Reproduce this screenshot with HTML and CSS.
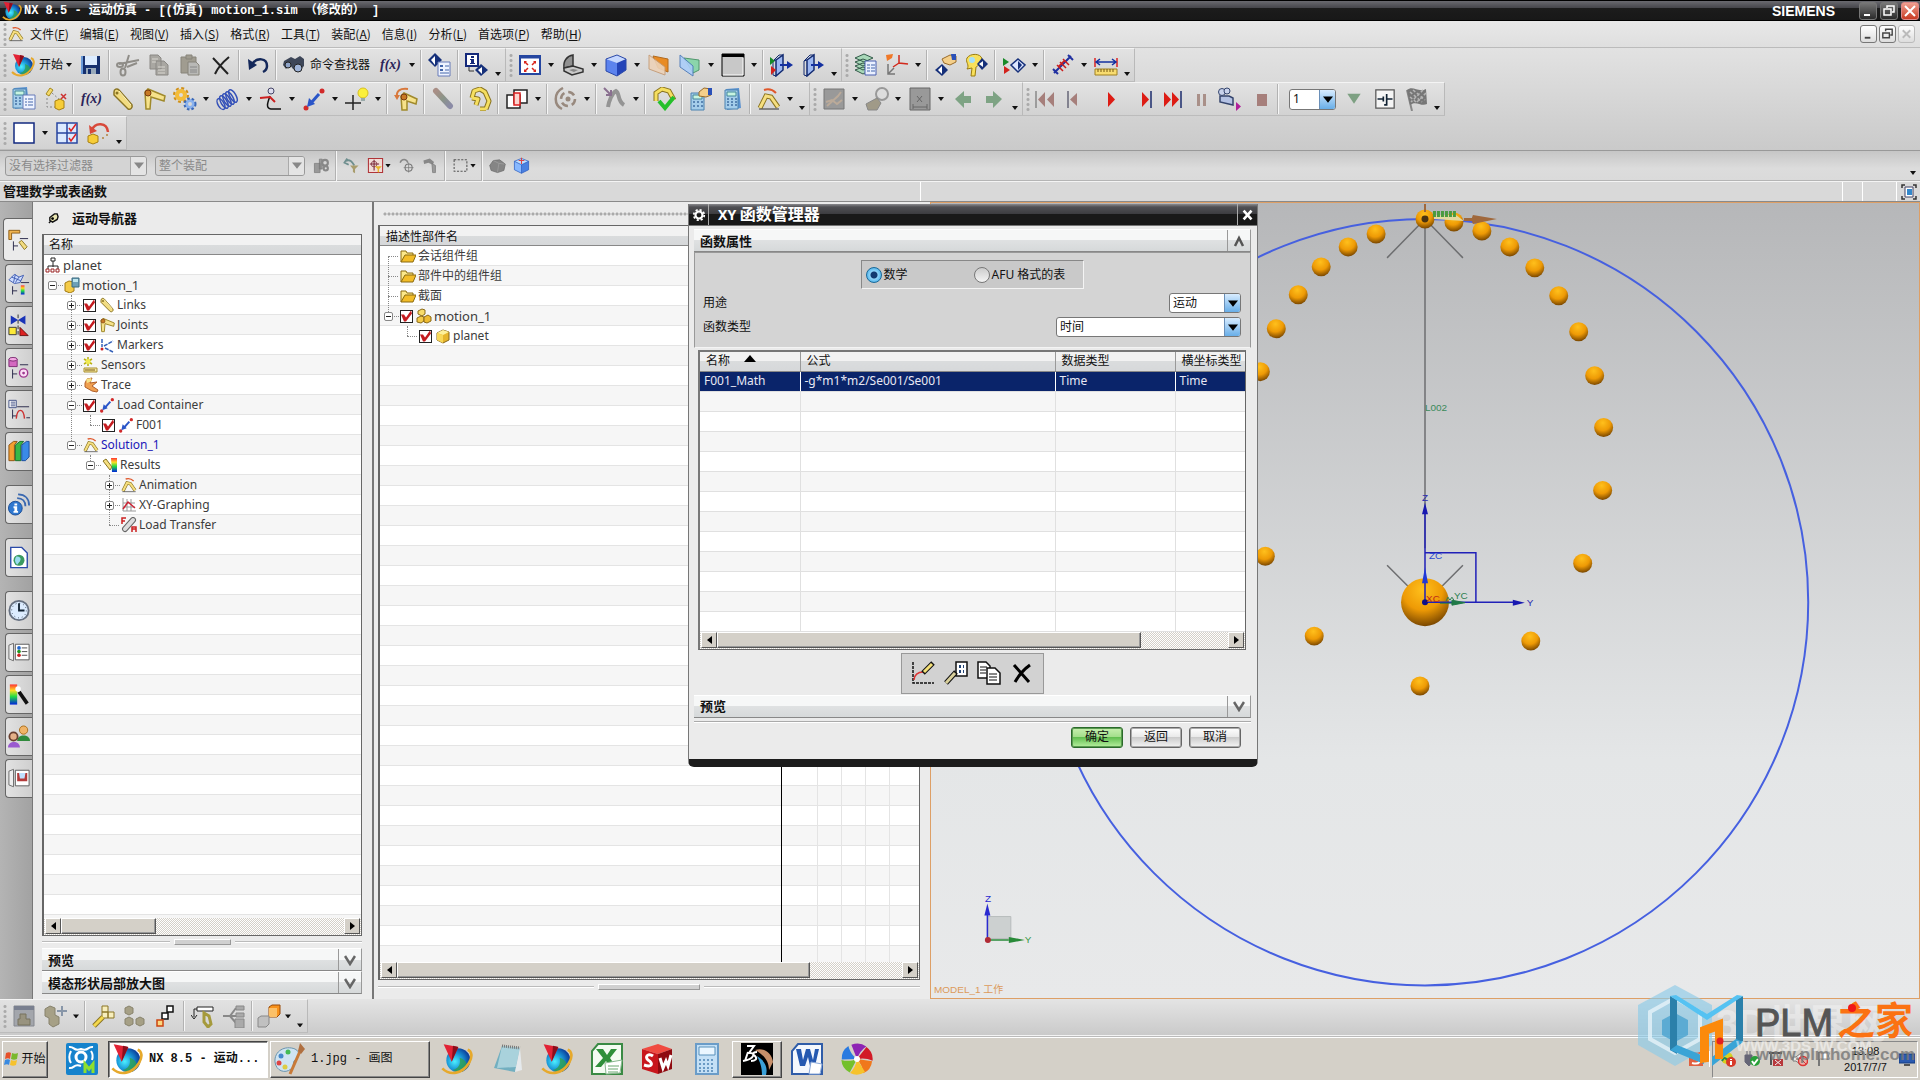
FILE: index.html
```html
<!DOCTYPE html>
<html lang="zh-CN">
<head>
<meta charset="utf-8">
<title>NX 8.5 - 运动仿真</title>
<link rel="stylesheet" href="styles.css">
</head>
<body>
<svg class="sprite" aria-hidden="true">
<defs>
<radialGradient id="gGlobe" cx=".35" cy=".55" r=".65"><stop offset="0" stop-color="#4df0ff"/><stop offset=".5" stop-color="#1a98d8"/><stop offset="1" stop-color="#0a3a98"/></radialGradient>
<radialGradient id="gBall" cx=".45" cy=".25" r=".75"><stop offset="0" stop-color="#ffc01c"/><stop offset=".55" stop-color="#ee9a05"/><stop offset="1" stop-color="#7a4700"/></radialGradient>
<linearGradient id="gRain" x2="0" y2="1"><stop offset="0" stop-color="#f33"/><stop offset=".3" stop-color="#fd2"/><stop offset=".6" stop-color="#2d4"/><stop offset="1" stop-color="#02d"/></linearGradient>
<linearGradient id="gSteel" x2="1" y2="1"><stop offset="0" stop-color="#a98f86"/><stop offset=".5" stop-color="#8a9488"/><stop offset="1" stop-color="#8b8ba6"/></linearGradient>
</defs>
<symbol id="nx" viewBox="0 0 24 24"><circle cx="13" cy="13" r="9" fill="url(#gGlobe)"/><path d="M9 20c4-1 6-4 5-9 3 1 6 3 5 7-2 4-6 5-10 2z" fill="#2fa050" opacity=".8"/><path d="M1 19c6 6 15 4 20-4 3-5 2-9-1-10" fill="none" stroke="#e6a92c" stroke-width="2"/><path d="M2 1l11 2-5 11z" fill="#e22235"/><path d="M9 2l4 1-5 11z" fill="#8c0d1c"/></symbol>
<symbol id="save" viewBox="0 0 24 24"><path d="M3 3h18v18H3z" fill="#16306e"/><path d="M6 3h12v9H6z" fill="#dcecff"/><path d="M7 15h10v6H7z" fill="#9ab"/><path d="M9 16h3v5H9z" fill="#16306e"/><path d="M3 3v18" stroke="#6a9ad8" stroke-width="2"/></symbol>
<symbol id="cut" viewBox="0 0 24 24"><g fill="none" stroke="#8f8d88" stroke-width="2"><path d="M13 2l-4 13M3 11l20-4M21 10L11 14"/><ellipse cx="7" cy="19" rx="2.500" ry="3.500"/><ellipse cx="4" cy="12" rx="3" ry="2"/></g></symbol>
<symbol id="copy" viewBox="0 0 24 24"><g fill="#a9a7a2" stroke="#8a8884"><path d="M3 2h8l3 3v11H3zM9 8h8l4 4v10H9z"/><path d="M5 6h6M5 9h4M11 14h7M11 17h7M11 20h7" stroke="#d8d6d0"/></g></symbol>
<symbol id="paste" viewBox="0 0 24 24"><g fill="#a09c90" stroke="#87847a"><path d="M3 4h15v16H3z"/><path d="M8 2h6v4H8z"/><path d="M10 9h8l3 3v10H10z" fill="#b9b9b6"/><path d="M12 14h7M12 17h7M12 19h7" stroke="#888"/></g></symbol>
<symbol id="del" viewBox="0 0 24 24"><path d="M4 5l15 16M20 4C14 9 9 14 6 21" fill="none" stroke="#222" stroke-width="2"/></symbol>
<symbol id="undo" viewBox="0 0 24 24"><path d="M6 11C11 4 21 5 21 13c0 3-2 5-4 6" fill="none" stroke="#14285a" stroke-width="2.500"/><path d="M2 6l1 11 8-5z" fill="#14285a"/></symbol>
<symbol id="binoc" viewBox="0 0 24 24"><path d="M2 8l7-4 4 2 5-3 4 3v7l-6 6-5-3-3-4-4 4-3-4z" fill="#3d4658"/><circle cx="6" cy="12" r="3" fill="#8fa4c8" stroke="#222"/><circle cx="16" cy="15" r="4" fill="#9fb4d8" stroke="#222"/></symbol>
<symbol id="inf1" viewBox="0 0 24 24"><path d="M7 0l7 7-7 7-7-7z" fill="#16307a"/><path d="M7 3v9L3 7z" fill="#fff"/><path d="M10 9h12v14H10z" fill="#eef3ff" stroke="#667ab8"/><path d="M12 12h3v2h-3zM12 16h3v2h-3z" fill="#46a"/><path d="M17 13h4M17 17h4M12 20h9" stroke="#46a"/></symbol>
<symbol id="inf2" viewBox="0 0 24 24"><path d="M1 1h12v12H1z" fill="#fff" stroke="#14287a" stroke-width="2"/><path d="M6 3h3v2H6zM5 6h4v4h1v1H5v-1h1V7H5z" fill="#14287a"/><path d="M16 11l7 6-7 6-6-6z" fill="#16307a"/><path d="M17 14v7l-4-4z" fill="#fff"/><path d="M4 14v4h5" stroke="#333" fill="none"/></symbol>
<symbol id="fit" viewBox="0 0 24 24"><path d="M2 3h20v18H2z" fill="#fff" stroke="#2546a0" stroke-width="2"/><path d="M2 4h20" stroke="#2546a0" stroke-width="3"/><path d="M7 9l3 3M17 9l-3 3M7 18l3-3M17 18l-3-3" stroke="#d9261c" stroke-width="1.500"/><path d="M6 8h3l-3 3zM18 8h-3l3 3zM6 19h3l-3-3zM18 19h-3l3-3z" fill="#d9261c"/></symbol>
<symbol id="lap" viewBox="0 0 24 24"><path d="M3 15C2 8 6 3 12 2v11z" fill="#909090" stroke="#333" stroke-width="1.500"/><path d="M3 15l9-2 10 3v3l-11 3-8-4z" fill="#c9c9c9" stroke="#333" stroke-width="1.500"/><path d="M8 17l4-1 5 1-4 2z" fill="#888"/></symbol>
<symbol id="cube" viewBox="0 0 24 24"><path d="M2 6l11-4 9 4-9 4z" fill="#c6d8ff"/><path d="M2 6l11 4v13L2 18z" fill="#5c83ee"/><path d="M22 6l-9 4v13l9-6z" fill="#2444b8"/><path d="M2 6l11-4 9 4v11l-9 6-11-5z" fill="none" stroke="#2a48a8"/></symbol>
<symbol id="clipo" viewBox="0 0 24 24"><path d="M6 3l15 3v13l-10-4z" fill="#e88b24" stroke="#b06a20"/><path d="M2 2l16 12v8L2 16z" fill="#ecd2b8" stroke="#c49a74" opacity=".9"/></symbol>
<symbol id="clipb" viewBox="0 0 24 24"><path d="M6 5l15 2v10l-6 3z" fill="#8bd5ab" stroke="#50966c"/><path d="M2 2l13 11v10L2 14z" fill="#abcdf8" stroke="#4a78b8" opacity=".9"/></symbol>
<symbol id="win" viewBox="0 0 24 24"><path d="M1 1h22v22H1z" fill="#c8c8c8" stroke="#000"/><path d="M1 1h22v3H1z"/><path d="M2 22h20V5" stroke="#fff" fill="none"/></symbol>
<symbol id="exit" viewBox="0 0 24 24"><path d="M6 7l7-5v15l-7 6z" fill="#9db8f2" stroke="#122a70" stroke-width="1.500"/><path d="M6 7l-3 1v14l3 1M13 2H9L3 8" fill="none" stroke="#122a70"/><path d="M10 12h9" stroke="#1430a0" stroke-width="2" fill="none"/><path d="M17 8l6 4-6 4z" fill="#1430a0"/></symbol>
<symbol id="exit1" viewBox="0 0 24 24"><use href="#exit"/><path d="M0 4l5 4-5 4z" fill="#188a28"/><path d="M1 13l5 4-5 5z" fill="#d2221c"/></symbol>
<symbol id="layers" viewBox="0 0 24 24"><g fill="#a8d8b8" stroke="#335a4a"><path d="M1 17l8-3 8 3-8 4zM1 13l8-3 8 3-8 4zM1 9l8-3 8 3-8 4zM1 5l9-4 9 4-9 4z"/></g><path d="M11 8h11v14H11z" fill="#eaf0ff" stroke="#4a60b0"/><path d="M13 12h3M13 15h3M13 18h3M17 12h4M17 15h4M17 18h4" stroke="#46a"/></symbol>
<symbol id="wcs" viewBox="0 0 24 24"><path d="M14 2v8l9 1M14 10l-6 4" stroke="#d22a1c" stroke-width="1.500" fill="none"/><path d="M1 2l7-1-1 4-5 3z" fill="#f07828"/><path d="M3 11v10h7M3 21l6-6" stroke="#777" stroke-width="1.500" fill="none"/></symbol>
<symbol id="dhand" viewBox="0 0 24 24"><path d="M8 11l6 6-6 6-7-6z" fill="#16307a"/><path d="M8 13v8l-4-4z" fill="#fff"/><path d="M8 6l8-4 6 1v6l-6 3-6-2z" fill="#f4cf8a" stroke="#9a6b2a"/><path d="M17 1h5v6h-4z" fill="#2a50b8"/></symbol>
<symbol id="dkey" viewBox="0 0 24 24"><path d="M2 5c3-5 14-5 15 1 0 5-5 7-6 8l-1 9H6l1-8-5 1c3-4-2-7 0-11z" fill="#f8e05a" stroke="#9a7c10"/><circle cx="7" cy="7" r="3" fill="#a5e0f8"/><path d="M17 5l6 6-6 6-5-6z" fill="#16307a"/><path d="M18 8v6l-4-3z" fill="#fff"/></symbol>
<symbol id="dplay" viewBox="0 0 24 24"><path d="M1 5l6 4-6 4z" fill="#188a28"/><path d="M2 13l6 4-6 4z" fill="#d2221c"/><path d="M16 6l7 6-7 7-7-7z" fill="#dde6ff" stroke="#16307a" stroke-width="1.500"/><path d="M16 8l4 4-4 5z" fill="#16307a"/></symbol>
<symbol id="meas" viewBox="0 0 24 24"><path d="M3 20L20 3M2 16l5 5M17 2l5 5" stroke="#2030a0" stroke-width="2"/><path d="M6 12l6 6M9 9l6 6M12 6l6 6M8 13l5-5" stroke="#cc1a1a" stroke-width="1.500"/></symbol>
<symbol id="ruler" viewBox="0 0 24 24"><path d="M1 5v9M23 5v9" stroke="#d22" stroke-width="1.500"/><path d="M2 9h20M6 6L2 9l4 3M18 6l4 3-4 3" stroke="#1430a0" stroke-width="1.500" fill="none"/><path d="M1 16h22v6H1z" fill="#f8dc70" stroke="#a08020"/><path d="M4 16v3M7 16v3M10 16v3M13 16v3M16 16v3M19 16v3" stroke="#765810"/></symbol>
<symbol id="calc" viewBox="0 0 24 24"><path d="M6 2l13-1 2 20-14 2z" fill="#5b92d0"/><path d="M5 3h13v19H5z" fill="#a5cdea" stroke="#4b82b0"/><path d="M7 5h9v4H7z" fill="#c8f4e0" stroke="#489"/><path d="M7 12h2M11 12h2M15 12h2M7 15h2M11 15h2M15 15h2M7 18h2M11 18h2M15 18h2" stroke="#5a86b4" stroke-width="2"/></symbol>
<symbol id="calcl" viewBox="0 0 24 24"><g transform="translate(-4 -1)"><use href="#calc" width="24" height="24"/></g><path d="M11 8h12v14H11z" fill="#eef3ff" stroke="#667ab8"/><path d="M13 12h2M13 15h2M13 18h2M16 12h5M16 15h5M16 18h5" stroke="#46a"/></symbol>
<symbol id="lcube" viewBox="0 0 24 24"><path d="M3 7l4-6 3 2-4 6z" fill="#f4da6a" stroke="#a58a20"/><path d="M4 11v9h8M9 6l8 7" stroke="#888" stroke-dasharray="2 2" fill="none"/><path d="M12 14l5-2 4 2v7l-5 2-4-2z" fill="#f6cd38" stroke="#a88010"/><path d="M18 7l5 5M23 7l-5 5" stroke="#c33" stroke-width="1.500"/></symbol>
<symbol id="link" viewBox="0 0 24 24"><path d="M3 5c0-3 3-4 5-2l13 15c1 3-2 5-4 4L3 8z" fill="#f2dc80" stroke="#8a7424" stroke-width="1.500"/><circle cx="6" cy="6" r="1.500" fill="#8a7424"/><path d="M8 4l12 14" stroke="#fff6c0"/></symbol>
<symbol id="joint" viewBox="0 0 24 24"><path d="M3 5l3-3 17 7-1 5-13-4-1 12H4z" fill="#f6e28a" stroke="#a08a2c" stroke-width="1.500"/><circle cx="6" cy="6" r="3" fill="#c87a24" stroke="#7a3a10"/></symbol>
<symbol id="gears" viewBox="0 0 24 24"><circle cx="8" cy="8" r="4" fill="none" stroke="#f4bc38" stroke-width="4"/><circle cx="8" cy="8" r="7" fill="none" stroke="#d09018" stroke-width="2" stroke-dasharray="3 2.500"/><circle cx="17" cy="17" r="3.500" fill="none" stroke="#8ab2ee" stroke-width="3"/><circle cx="17" cy="17" r="5.500" fill="none" stroke="#3a68b8" stroke-width="2" stroke-dasharray="2.500 2"/></symbol>
<symbol id="spring" viewBox="0 0 24 24"><g fill="none" stroke="#3350b8" stroke-width="1.500"><ellipse cx="5" cy="17" rx="3" ry="6" transform="rotate(-30 5 17)"/><ellipse cx="8" cy="15" rx="3" ry="7" transform="rotate(-30 8 15)"/><ellipse cx="11" cy="13" rx="3" ry="7" transform="rotate(-30 11 13)"/><ellipse cx="14" cy="11" rx="3" ry="7" transform="rotate(-30 14 11)"/><ellipse cx="17" cy="9" rx="3" ry="7" transform="rotate(-30 17 9)"/></g></symbol>
<symbol id="curve" viewBox="0 0 24 24"><path d="M11 9c-3 8-4 12 1 13h10" fill="none" stroke="#111" stroke-width="1.500"/><circle cx="12" cy="4" r="3" fill="#dde" stroke="#446"/><path d="M1 11l10-1 5 5" stroke="#cc2020" stroke-width="2" fill="none"/></symbol>
<symbol id="force" viewBox="0 0 24 24"><circle cx="20" cy="4" r="2.500" fill="#d22a2a"/><circle cx="4" cy="21" r="2.500" fill="#d22a2a"/><path d="M17 7l-8 9" stroke="#2a55c8" stroke-width="3"/><path d="M5 20l2-9 6 6z" fill="#2a55c8"/></symbol>
<symbol id="bulb" viewBox="0 0 24 24"><path d="M8 8v15M0 16h16" stroke="#222" stroke-width="1.500"/><circle cx="18" cy="6" r="5" fill="#fbf03c" stroke="#d8c020"/><path d="M16 11h4v3h-4z" fill="#9aa"/></symbol>
<symbol id="rjoint" viewBox="0 0 24 24"><path d="M7 9l3-3 13 6-1 5-9-3v9H8z" fill="#f6e28a" stroke="#a08a2c" stroke-width="1.500"/><circle cx="10" cy="10" r="3" fill="#c87a24" stroke="#7a3a10"/><path d="M3 10C2 4 6 1 14 2" fill="none" stroke="#d8783c" stroke-width="2"/><path d="M0 8h6l-3 5z" fill="#d8783c"/></symbol>
<symbol id="pill" viewBox="0 0 24 24"><path d="M5 4l14 15" stroke="url(#gSteel)" stroke-width="6" stroke-linecap="round"/></symbol>
<symbol id="arm" viewBox="0 0 24 24"><path d="M4 11L6 4l6-2 5 3 4 9-3 8M4 11l6 1-2 6M18 22h-6" fill="none" stroke="#8a7420" stroke-width="5" stroke-linejoin="round"/><path d="M4 11L6 4l6-2 5 3 4 9-3 8M4 11l6 1-2 6M18 22h-6" fill="none" stroke="#f6df60" stroke-width="3" stroke-linejoin="round"/></symbol>
<symbol id="over" viewBox="0 0 24 24"><path d="M9 3h13v13H9zM2 8h13v13H2z" fill="#fff" stroke="#222" stroke-width="1.500"/><path d="M9 6h6v12H9z" fill="#fbd6d0" stroke="#d22" stroke-width="1.500"/></symbol>
<symbol id="orbit" viewBox="0 0 24 24"><g fill="none" stroke="#98897e" stroke-width="2.500"><path d="M9 1C-1 6 0 18 8 22"/><circle cx="14" cy="12" r="7" stroke-dasharray="7 4"/></g><circle cx="14" cy="12" r="2.500" fill="#98897e"/></symbol>
<symbol id="gcurve" viewBox="0 0 24 24"><path d="M5 20C6 14 9 6 13 4c4 2 1 10 8 14" fill="none" stroke="#949494" stroke-width="4"/><path d="M1 1l7 7M8 3v5H3" stroke="#8a7090" stroke-width="2" fill="none"/></symbol>
<symbol id="armok" viewBox="0 0 24 24"><path d="M4 14V6l6-4 7 2 5 9" fill="none" stroke="#8a7420" stroke-width="5"/><path d="M4 14V6l6-4 7 2 5 9" fill="none" stroke="#f6df60" stroke-width="3"/><path d="M7 14l6 7 9-11" fill="none" stroke="#25c02c" stroke-width="4"/></symbol>
<symbol id="calch" viewBox="0 0 24 24"><path d="M2 6h13v17H2z" fill="#a5cdea" stroke="#4b82b0"/><path d="M4 8h9v4H4z" fill="#c8f4e0" stroke="#489"/><path d="M4 15h2M8 15h2M12 15h2M4 19h2M8 19h2M12 19h2" stroke="#5a86b4" stroke-width="2"/><path d="M10 5l5-4 7 1v6l-5 2-7-1z" fill="#f4cf8a" stroke="#9a6b2a"/><path d="M19 1h4v7h-4z" fill="#2a50b8"/></symbol>
<symbol id="solve" viewBox="0 0 24 24"><path d="M3 21L9 9l5 1 7 10" fill="none" stroke="#8a7420" stroke-width="5"/><path d="M3 21L9 9l5 1 7 10" fill="none" stroke="#f6df80" stroke-width="3"/><path d="M7 3c6-2 9 0 12 3" fill="none" stroke="#e0582c" stroke-width="2"/><path d="M2 22h20" stroke="#333"/></symbol>
<symbol id="gwr" viewBox="0 0 24 24"><path d="M2 2h20v20H2z" fill="#999" stroke="#777"/><path d="M5 19L16 9l3-4M4 15l6-2 5 4 5-4" stroke="#ba9" stroke-width="2" fill="none"/></symbol>
<symbol id="gmag" viewBox="0 0 24 24"><circle cx="17" cy="7" r="6" fill="#ddd" stroke="#999" stroke-width="2"/><path d="M1 17l11-6 4 5-4 7H3z" fill="#a09a88" stroke="#888"/></symbol>
<symbol id="gx" viewBox="0 0 24 24"><path d="M2 1h20v22H2z" fill="#999" stroke="#666"/><path d="M9 9l5 6M14 9l-5 6M5 20h14M5 17v5M19 17v5" stroke="#666"/></symbol>
<symbol id="al" viewBox="0 0 24 24"><path d="M4 12l9-8v5h7v7h-7v5z" fill="#7ea384"/></symbol>
<symbol id="ar" viewBox="0 0 24 24"><path d="M20 12l-9-8v5H4v7h7v5z" fill="#7ea384"/></symbol>
<symbol id="rew" viewBox="0 0 24 24"><path d="M12 5v15l-7-7.500zM21 5v15l-7-7.500z" fill="#a67f7b"/><path d="M3 4v17" stroke="#888" stroke-width="1.500"/></symbol>
<symbol id="back" viewBox="0 0 24 24"><path d="M17 6v13l-7-6.500z" fill="#a67f7b"/><path d="M8 4v17" stroke="#667" stroke-width="1.500"/></symbol>
<symbol id="play" viewBox="0 0 24 24"><path d="M9 5l7 7.500L9 20z" fill="#dd1c14"/></symbol>
<symbol id="step" viewBox="0 0 24 24"><path d="M8 5l7 7.500L8 20z" fill="#dd1c14"/><path d="M17 4v17" stroke="#1b2b6b" stroke-width="1.500"/></symbol>
<symbol id="ff" viewBox="0 0 24 24"><path d="M3 5l7 7.500L3 20zM11 5l7 7.500-7 7.500z" fill="#dd1c14"/><path d="M20 4v17" stroke="#1b2b6b" stroke-width="1.500"/></symbol>
<symbol id="pause" viewBox="0 0 24 24"><path d="M9 7h3v12H9zM15 7h3v12h-3z" fill="#a99089"/></symbol>
<symbol id="stop" viewBox="0 0 24 24"><path d="M9 7h10v12H9z" fill="#a67f7b"/></symbol>
<symbol id="cam" viewBox="0 0 24 24"><path d="M3 9h9l4 2v7l-13-3z" fill="#b4c2e4" stroke="#34446c" stroke-width="1.500"/><circle cx="5" cy="5" r="3.500" fill="#c8d2ec" stroke="#34446c"/><circle cx="10" cy="4" r="3" fill="#c8d2ec" stroke="#34446c"/><path d="M19 15l5 4.500-5 4.500z" fill="#b0209a"/></symbol>
<symbol id="gtri" viewBox="0 0 24 24"><path d="M2 4h20l-10 15z" fill="#7da082"/></symbol>
<symbol id="axis" viewBox="0 0 24 24"><path d="M1 1h22v22H1z" fill="#f5f5f5" stroke="#555" stroke-width="1.500"/><path d="M3 12h7M14 12h7M14 6v13h-3M10 9v6" stroke="#123" stroke-width="2" fill="none"/></symbol>
<symbol id="flag" viewBox="0 0 24 24"><path d="M3 3l5 21" stroke="#888" stroke-width="2"/><path d="M3 3c6-5 11 3 19-1l1 15c-6 3-11-4-17 1z" fill="#777"/><path d="M6 5l12 10M9 3l12 10M6 10l6 5M19 3L7 15M22 6l-9 9" stroke="#b5b5b5" stroke-width="1.500" stroke-dasharray="3 2"/></symbol>
<symbol id="blank" viewBox="0 0 24 24"><path d="M2 2h20v20H2z" fill="#fff" stroke="#132a80" stroke-width="1.500"/></symbol>
<symbol id="gridc" viewBox="0 0 24 24"><path d="M2 2h20v20H2z" fill="#dceaff" stroke="#2846a0" stroke-width="1.500"/><path d="M12 2v20M2 12h20" stroke="#2846a0" stroke-width="1.500"/><path d="M14 7l2 3 5-7M14 17l2 3 5-7" stroke="#d22" stroke-width="1.500" fill="none"/></symbol>
<symbol id="redo" viewBox="0 0 24 24"><path d="M6 9c3-8 15-8 16 2" fill="none" stroke="#d8493a" stroke-width="2.500"/><path d="M3 4l1 9 7-3z" fill="#d8493a"/><path d="M2 15l5-2 5 2v6l-5 2-5-2z" fill="#f6cd38" stroke="#a88010"/><path d="M16 17h2M20 14h2" stroke="#b96" stroke-width="2"/></symbol>
<symbol id="gfind" viewBox="0 0 24 24"><path d="M2 9h8v13H2zM9 3h4v14H9z" fill="#999" stroke="#777"/><circle cx="17" cy="8" r="4" fill="none" stroke="#888" stroke-width="3"/><circle cx="18" cy="16" r="3" fill="none" stroke="#888" stroke-width="3"/></symbol>
<symbol id="funl" viewBox="0 0 24 24"><path d="M3 6c7-4 10 1 13 6M6 2L2 8l6 3" fill="none" stroke="#6f8f8f" stroke-width="2.500"/><path d="M10 12h12l-5 5v6l-3-2v-4z" fill="#a99d6d"/></symbol>
<symbol id="snap" viewBox="0 0 24 24"><path d="M2 2h20v20H2z" fill="#f1dcd6" stroke="#b03438" stroke-width="1.500"/><path d="M10 4v15M4 10h13" stroke="#723" stroke-width="1.500"/><circle cx="10" cy="10" r="4" fill="none" stroke="#723"/><path d="M11 13h10l-4 4v5l-2-1v-4z" fill="#e9b72a"/></symbol>
<symbol id="gtarget" viewBox="0 0 24 24"><path d="M3 8c2-6 9-6 11 0" fill="none" stroke="#888" stroke-width="2"/><circle cx="15" cy="15" r="5" fill="none" stroke="#777" stroke-width="1.500"/><path d="M15 8v14M8 15h14" stroke="#777"/></symbol>
<symbol id="gham" viewBox="0 0 24 24"><path d="M2 5l9-3 6 5-2 4-6-3-6 2z" fill="#888"/><path d="M14 9l5 3v10h-4z" fill="#9a9a9a" stroke="#777"/></symbol>
<symbol id="rect" viewBox="0 0 24 24"><path d="M3 4h18v16H3z" fill="none" stroke="#555" stroke-width="1.500" stroke-dasharray="3 2"/></symbol>
<symbol id="rock" viewBox="0 0 24 24"><path d="M1 12l5-7 9-1 8 6-2 9-9 3-9-3z" fill="#858585" stroke="#6a6a6a"/><path d="M6 5l8 4 8 1M14 9l-2 12" stroke="#a2a2a2" fill="none"/></symbol>
<symbol id="scube" viewBox="0 0 24 24"><path d="M2 6l10-4 10 4-10 5z" fill="#bfe0ff"/><path d="M2 6l10 5v12L2 18z" fill="#88b8ff"/><path d="M22 6l-10 5v12l10-5z" fill="#4a80e0"/><path d="M2 6l10-4 10 4v12l-10 5-10-5zM2 6l10 5 10-5M12 11v12" fill="none" stroke="#2458c0"/><path d="M12 1v9M8 5h8" stroke="#d44" stroke-width="1.500"/></symbol>
<!-- tree icons -->
<symbol id="t-root" viewBox="0 0 16 16"><path d="M6 1h4v3H6zM8 4v6M3 12v-3h10v3" fill="none" stroke="#222"/><path d="M1 12h3v3H1zM6 12h3v3H6zM11 12h3v3h-3z" fill="#fff" stroke="#922"/></symbol>
<symbol id="t-mot" viewBox="0 0 16 16"><path d="M1 6l4-2 5 1v9l-4 2-5-2z" fill="#f4cb48" stroke="#a47c14"/><path d="M8 1h7v9H8z" fill="#6da0b8" stroke="#3a6a80"/><path d="M9 2h5v3H9z" fill="#bfe6ee"/></symbol>
<symbol id="t-mark" viewBox="0 0 16 16"><path d="M3 2v8M5 9l9-5M6 11l8 4" stroke="#3460b8" stroke-width="1.500" stroke-dasharray="4 1" fill="none"/><circle cx="3" cy="12" r="1.500" fill="#c22"/></symbol>
<symbol id="t-sens" viewBox="0 0 16 16"><path d="M5 0v9M1 2l8 5M9 2L1 7" stroke="#b8b010" stroke-width="1.500"/><circle cx="5" cy="4.500" r="2.500" fill="#f0ea50"/><path d="M1 11h13v4H1z" fill="#f6e6a0" stroke="#a89030"/><path d="M3 12v2M5 12v2M7 12v2M9 12v2M11 12v2" stroke="#765810"/></symbol>
<symbol id="t-trace" viewBox="0 0 16 16"><path d="M2 6l2-4 5-1-2 5 7-1-5 4 6 4-1 2-5-1-7-4z" fill="#f0a050" stroke="#b0602a"/><path d="M3 2l5-1 1 3-5 2z" fill="#f6e28a"/></symbol>
<symbol id="t-res" viewBox="0 0 16 16"><path d="M9 1h6v14h-5z" fill="url(#gRain)"/><path d="M1 4l3-2 6 8-2 3z" fill="#f6df80" stroke="#8a7420"/></symbol>
<symbol id="t-xy" viewBox="0 0 16 16"><path d="M2 1v13h13M6 2v12M10 2v12M2 6h12M2 10h12" stroke="#999" fill="none"/><path d="M2 12l5-7 7 6" fill="none" stroke="#c23" stroke-width="1.500"/></symbol>
<symbol id="t-load" viewBox="0 0 16 16"><path d="M4 12l8-9" stroke="#666" stroke-width="6" stroke-linecap="round"/><path d="M4 12l8-9" stroke="#ddd" stroke-width="4" stroke-linecap="round"/><path d="M1 7V1h4M1 4h3M11 15v-5h4v5M11 12h4" stroke="#c22" stroke-width="1.500" fill="none"/></symbol>
<symbol id="t-folder" viewBox="0 0 16 16"><path d="M1 14V3h5l1 2h6v3" fill="#fce88a" stroke="#8a6a10"/><path d="M1 14l4-7h11l-3 7z" fill="#f2bc28" stroke="#8a6a10"/></symbol>
<symbol id="t-cube" viewBox="0 0 16 16"><path d="M2 5l6-3 6 2v8l-6 3-6-3z" fill="#e6b52c" stroke="#86661a"/><path d="M2 5l6-3 6 2-6 3z" fill="#fdf09a"/><path d="M2 5l6 2v8l-6-3z" fill="#f8d858"/></symbol>
<symbol id="t-asm" viewBox="0 0 16 16"><path d="M2 3l4-2 3 1v4L6 8 2 6z" fill="#f8dc68" stroke="#8a6a18"/><path d="M1 10l4-2 3 1v4l-3 2-4-1z" fill="#f4cb48" stroke="#8a6a18"/><path d="M8 9l4-2 3 2v4l-4 2-3-1z" fill="#eebb30" stroke="#8a6a18"/></symbol>
<!-- resource bar icons -->
<symbol id="s-nav" viewBox="0 0 24 24"><path d="M2 12V2h12v3H5v7z" fill="#f0b450" stroke="#8a5a14"/><path d="M14 11h9M7 14v10M7 19h5" stroke="#224"/><path d="M13 15l3-2 6 7-3 3z" fill="#f2dc80" stroke="#8a7424"/></symbol>
<symbol id="s-mesh" viewBox="0 0 24 24"><path d="M1 8l6-6 5 3 5-2-4 8-6 1zM4 5l10 4M8 2l-2 9M12 5l-4 6" fill="#cddcff" stroke="#3c5ab0"/><path d="M14 11h9M5 15v9M5 20h5" stroke="#224"/><path d="M14 14h4v10h-4z" fill="url(#gRain)"/></symbol>
<symbol id="s-con" viewBox="0 0 24 24"><path d="M3 1v10l8-5zM19 1v10l-8-5z" fill="#1a34b8"/><path d="M11 0v24" stroke="#222" stroke-dasharray="4 2"/><path d="M1 14h8v8H1z" fill="#fbe838" stroke="#333"/><path d="M13 14v9h9z" fill="#d22" stroke="#611"/></symbol>
<symbol id="s-part" viewBox="0 0 24 24"><path d="M1 3h9v8H1z" fill="#d46ac0" stroke="#7a2a70"/><ellipse cx="5.500" cy="3" rx="4.500" ry="2" fill="#f4a8e4" stroke="#7a2a70"/><path d="M13 9h9M5 14v10M5 19h5" stroke="#224"/><circle cx="17" cy="18" r="4.500" fill="#fbe0f6" stroke="#a03a90" stroke-width="1.500"/><circle cx="17" cy="18" r="1.500" fill="#a03a90"/></symbol>
<symbol id="s-xy" viewBox="0 0 24 24"><path d="M1 2h8v8H1zM3 4h5M3 6h5M3 8h5" fill="#fff" stroke="#3a4a80"/><path d="M10 9h13M5 12v10M5 19h5M20 21h4" stroke="#224"/><path d="M9 22c1-12 8-12 9 0" fill="none" stroke="#c33" stroke-width="1.500"/></symbol>
<symbol id="s-books" viewBox="0 0 24 24"><path d="M1 5l5-4h4L7 5v17H1z" fill="#f4a030" stroke="#8a5010"/><path d="M8 5l5-4h4l-3 4v17H8z" fill="#38b848" stroke="#186a28"/><path d="M15 5l5-4h3v17l-4 4h-4z" fill="#3a8ae8" stroke="#184a98"/></symbol>
<symbol id="s-info" viewBox="0 0 24 24"><circle cx="8" cy="16" r="7.500" fill="#2f78d0" stroke="#174a94"/><path d="M7 11h3v2H7zM6 14h4v5h1v2H6v-2h1v-3H6z" fill="#fff"/><path d="M10 5c6 0 9 4 9 9M11 1c8 0 12 5 12 12" stroke="#3a68b0" stroke-width="2" fill="none"/></symbol>
<symbol id="s-web" viewBox="0 0 24 24"><path d="M3 1h12l6 6v16H3z" fill="#fff" stroke="#2a4aa8" stroke-width="1.500"/><circle cx="12" cy="15" r="6" fill="#3a9a60"/><path d="M9 11c4 0 6 2 4 5l-3 4c-3-3-3-6-1-9z" fill="#9adcf0"/></symbol>
<symbol id="s-clock" viewBox="0 0 24 24"><circle cx="12" cy="12" r="10.500" fill="#dcecff" stroke="#667080" stroke-width="2"/><circle cx="12" cy="12" r="8" fill="none" stroke="#345" stroke-dasharray="1 3.200"/><path d="M12 4v8h6" fill="none" stroke="#123" stroke-width="2"/></symbol>
<symbol id="s-door" viewBox="0 0 24 24"><path d="M1 4l5-2v19l-5-2z" fill="#eee" stroke="#666"/><path d="M8 3h15v17H8z" fill="#fff" stroke="#555"/><path d="M15 7h6M15 11h6M15 15h6" stroke="#444"/><circle cx="12" cy="7" r="2" fill="#26c"/><circle cx="12" cy="11" r="2" fill="#292"/><circle cx="12" cy="15" r="2" fill="#c22"/></symbol>
<symbol id="s-wand" viewBox="0 0 24 24"><path d="M2 1h8v22H2z" fill="url(#gRain)"/><path d="M12 9l9 13" stroke="#111" stroke-width="4"/><circle cx="11" cy="6" r="3" fill="#fff"/></symbol>
<symbol id="s-ppl" viewBox="0 0 24 24"><path d="M10 17c0-8 14-8 14 0z" fill="#2f8a3c"/><circle cx="17" cy="5" r="4.500" fill="#f0b468" stroke="#a86a14"/><path d="M0 24c0-8 13-8 13 0z" fill="#9a5ad0"/><circle cx="6" cy="12" r="4.500" fill="#e4b088" stroke="#6a4030" stroke-width="2"/></symbol>
<symbol id="s-pic" viewBox="0 0 24 24"><path d="M1 4l5-2v19l-5-2z" fill="#eee" stroke="#666"/><path d="M8 3h15v17H8z" fill="#fff" stroke="#555"/><path d="M10 6h11v9H10z" fill="#b33a3a"/><path d="M12 6h7l-1 6h-5z" fill="#bfe0ff"/></symbol>
<!-- assembly bar icons -->
<symbol id="b1" viewBox="0 0 24 24"><path d="M2 2h20v20H2z" fill="#a3a6ac" stroke="#85888f"/><path d="M2 4h20" stroke="#7a8090" stroke-width="4"/><path d="M8 10h6v5h4v6H6v-6h2z" fill="#98937f" stroke="#77735f"/></symbol>
<symbol id="b2" viewBox="0 0 24 24"><path d="M2 5l5-3 5 2v7l4 2v7l-6 3-4-3v-6l-4-2z" fill="#a6a086" stroke="#87826c"/><path d="M19 2v10M14 7h10" stroke="#8896a8" stroke-width="2"/></symbol>
<symbol id="b3" viewBox="0 0 24 24"><path d="M10 2h6v6h-6zM16 8h6v6h-6zM10 8h6v6h-6z" fill="#f7eebc" stroke="#8a7424"/><path d="M2 22l9-9" stroke="#8a7424" stroke-width="5"/><path d="M2 22l9-9" stroke="#f4d84c" stroke-width="3"/></symbol>
<symbol id="b4" viewBox="0 0 24 24"><path d="M2 4l4-2 4 2v5l-4 2-4-2zM2 15l4-2 4 2v5l-4 2-4-2zM13 15l4-2 4 2v5l-4 2-4-2z" fill="#a6a086" stroke="#87826c"/></symbol>
<symbol id="b5" viewBox="0 0 24 24"><path d="M13 2h6v6h-6zM8 9h6v6H8z" fill="#fff" stroke="#111" stroke-width="1.500"/><path d="M3 16h6v6H3z" fill="#fbd880" stroke="#c41" stroke-width="1.500"/></symbol>
<symbol id="b6" viewBox="0 0 24 24"><path d="M6 3h16v4H6z" fill="#fff" stroke="#222"/><path d="M6 5H3v8M0 11l3 4 3-4" stroke="#222" fill="none"/><path d="M13 9l5 3 2 8-3 3-4-5z" fill="none" stroke="#a59a3c" stroke-width="3"/></symbol>
<symbol id="b7" viewBox="0 0 24 24"><path d="M1 12h7l6-8M8 12h6M8 12l6 7" stroke="#888" stroke-width="2" fill="none"/><path d="M14 2h8v4h-8zM14 9h8v4h-8zM13 15h9v9h-9z" fill="#aaa" stroke="#888"/></symbol>
<symbol id="b8" viewBox="0 0 24 24"><path d="M12 3l3-2h8v9l-3 3h-8z" fill="#f8921c" stroke="#9a4a08"/><path d="M12 4h8v9h-8z" fill="#fbc068"/><path d="M1 14l3-2h8v8l-3 3H1z" fill="#c0c0c0" stroke="#888"/></symbol>
<!-- taskbar icons -->
<symbol id="k-win" viewBox="0 0 16 16"><path d="M2 2c2-1 4-1 5 0L6 8C5 7 3 7 1 8z" fill="#e6502a"/><path d="M8 2c2 1 4 1 6 0l-1 6c-2 1-4 1-6 0z" fill="#7ab82c"/><path d="M1 9c2-1 4-1 5 0l-1 5c-1-1-3-1-5 0z" fill="#3a8ae0"/><path d="M7 9c2 1 4 1 6 0l-1 5c-2 1-4 1-6 0z" fill="#f6c22c"/></symbol>
<symbol id="k-m" viewBox="0 0 32 32"><rect width="32" height="32" rx="2" fill="#1683cc"/><circle cx="15" cy="14" r="5" fill="none" stroke="#fff" stroke-width="3"/><path d="M3 4c6-1 4 5 12 2 8 3 6-3 12-2M3 25c6 1 4-5 12-2M5 8c-2 4-2 9 0 12M25 8c2 3 2 6 1 9" stroke="#fff" stroke-width="2" fill="none"/><path d="M19 30v-9l4 5 4-5v9" fill="none" stroke="#8ee02c" stroke-width="3"/></symbol>
<symbol id="k-paint" viewBox="0 0 32 32"><path d="M2 19C1 8 12 2 22 6c6 3 4 9 0 11-3 2 0 6-4 9-6 5-15 2-16-7z" fill="#cfe4f2" stroke="#6a94ae"/><circle cx="8" cy="13" r="2.500" fill="#48c"/><circle cx="15" cy="9" r="2.500" fill="#4b5"/><circle cx="6" cy="20" r="2.500" fill="#d44"/><circle cx="12" cy="24" r="2.500" fill="#dc4"/><path d="M28 6L17 31" stroke="#c87a38" stroke-width="3"/><path d="M25 8l2-8 5 6-4 5z" fill="#b07040"/></symbol>
<symbol id="k-note" viewBox="0 0 32 32"><path d="M11 3l18 2-5 24-21-4z" fill="#72afc0"/><path d="M11 3l18 2-4 19-19 1z" fill="#a9d2dc"/><path d="M11 3l18 2" stroke="#777" stroke-width="3" stroke-dasharray="1 1"/><path d="M24 29l5-24 2 22z" fill="#e5e9ec"/></symbol>
<symbol id="k-xl" viewBox="0 0 32 32"><path d="M7 1h24v30H1V8z" fill="#f4fbf2" stroke="#3a8a44" stroke-width="2"/><path d="M5 6h7l4 6 4-6h6l-7 9 6 9h-6l-4-6-5 6H4l8-9z" fill="#2f8f3a"/><path d="M14 20l17-3-2 13-14 1z" fill="#fff" stroke="#8ab890"/><path d="M17 23h11M17 26h10M17 29h10" stroke="#6aa870"/></symbol>
<symbol id="k-sw" viewBox="0 0 32 32"><path d="M1 6l16-5 14 5-14 5z" fill="#f04a40"/><path d="M1 6l16 5v20L1 26z" fill="#c8161c"/><path d="M31 6l-14 5v20l14-5z" fill="#8f0a10"/><path d="M12 13c-4-3-9 0-5 4 5 3 5 8-4 5M19 15l3 10 3-7 2 5 3-11" fill="none" stroke="#fff" stroke-width="3"/></symbol>
<symbol id="k-calc" viewBox="0 0 32 32"><path d="M5 1h22v30H5z" fill="#c4e0f6" stroke="#6a9cc8" stroke-width="2"/><path d="M8 4h16v8H8z" fill="#eaf6ff" stroke="#5890ba"/><path d="M8 17h16M8 21h16M8 25h16M8 28h16" stroke="#6a9ac4" stroke-width="2" stroke-dasharray="2 2"/></symbol>
<symbol id="k-ds" viewBox="0 0 32 32"><path d="M0 0h32v32H0z"/><path d="M14 7c9-3 17 3 18 12l-4 8c0-9-5-15-14-20z" fill="#c8906a"/><path d="M16 13c8 5 11 11 9 19h-4c0-8-2-13-5-19z" fill="#3aa0d8"/><path d="M6 3h7l-5 7c7-1 6 6-6 8M16 9c-5 0-4 3-2 4 3 3 0 5-4 5M7 9l-3 9" fill="none" stroke="#fff" stroke-width="2"/></symbol>
<symbol id="k-wd" viewBox="0 0 32 32"><path d="M7 1h24v30H1V8z" fill="#f3f7fd" stroke="#2f5ca8" stroke-width="2"/><path d="M5 6h5l2 11 3-11h4l3 11 2-11h4l-4 17h-5l-2-9-3 9H9z" fill="#2458b0"/><path d="M20 19l11 2-2 10H18z" fill="#fff" stroke="#8aa8d8"/></symbol>
<symbol id="k-wheel" viewBox="0 0 32 32"><g transform="translate(16 16)"><path d="M0 0L-8-13A15 15 0 0 1 7-14C3-10 1-6 0 0z" fill="#8e24b4" transform="rotate(10)"/><path d="M0 0L-8-13A15 15 0 0 1 7-14C3-10 1-6 0 0z" fill="#d21a26" transform="rotate(70)"/><path d="M0 0L-8-13A15 15 0 0 1 7-14C3-10 1-6 0 0z" fill="#f0781c" transform="rotate(130)"/><path d="M0 0L-8-13A15 15 0 0 1 7-14C3-10 1-6 0 0z" fill="#f6c22c" transform="rotate(180)"/><path d="M0 0L-8-13A15 15 0 0 1 7-14C3-10 1-6 0 0z" fill="#74c02c" transform="rotate(240)"/><path d="M0 0L-8-13A15 15 0 0 1 7-14C3-10 1-6 0 0z" fill="#2a7ae0" transform="rotate(300)"/><circle r="3" fill="#fff"/></g></symbol>
<symbol id="k-s" viewBox="0 0 16 16"><path d="M1 1h14v14H1z" fill="#e06040"/><path d="M12 4c-8-2-10 2-4 4 6 1 4 6-4 4" fill="none" stroke="#fff" stroke-width="2"/></symbol>
<symbol id="k-t1" viewBox="0 0 16 16"><circle cx="7" cy="7" r="6" fill="#d8d020"/><path d="M2 10c4-8 4 4 10-4" stroke="#285" stroke-width="2" fill="none"/><circle cx="11" cy="11" r="5" fill="#d83a2a"/><path d="M11 8v1M11 10v4" stroke="#fff" stroke-width="2"/></symbol>
<symbol id="k-t2" viewBox="0 0 16 16"><path d="M1 4h7v7l-3 4-4-4zM3 0v4M6 0v4" fill="#667" stroke="#667"/><circle cx="11" cy="10" r="5" fill="#28a038"/><path d="M8 10l2 3 4-5" stroke="#fff" stroke-width="2" fill="none"/></symbol>
<symbol id="k-t3" viewBox="0 0 16 16"><path d="M1 2h13M3 2v12" stroke="#555" stroke-width="2"/><path d="M5 8h10v7H5z" fill="#b8383c"/><path d="M7 9l6 5M13 9l-6 5" stroke="#eee"/></symbol>
<symbol id="k-t4" viewBox="0 0 16 16"><path d="M1 6h3l5-4v12l-5-4H1z" fill="#eee" stroke="#777"/><circle cx="11" cy="10" r="4.500" fill="#eab0a8" stroke="#d33" stroke-width="1.500"/><path d="M8 7l6 6" stroke="#d33"/></symbol>
<symbol id="k-t5" viewBox="0 0 16 16"><path d="M3 1v14" stroke="#777" stroke-width="2"/><path d="M4 2h10l-2 3 2 3H4z" fill="#fff" stroke="#999"/></symbol>
<symbol id="k-mon" viewBox="0 0 16 16"><path d="M0 3h16v9H0z" fill="#2a5ab0" stroke="#123a80"/><path d="M5 14h6" stroke="#555" stroke-width="2"/></symbol>
<symbol id="dd" viewBox="0 0 8 5"><path d="M0 0h8L4 5z"/></symbol>
<symbol id="up" viewBox="0 0 12 12"><path d="M2 11l4-8 4 8" fill="none" stroke="#555" stroke-width="2.500"/></symbol>
<symbol id="dn" viewBox="0 0 12 12"><path d="M1 2l5 8 5-8" fill="none" stroke="#666" stroke-width="2.500"/></symbol>
</svg>

<header class="titlebar">
  <svg class="i20"><use href="#nx"/></svg>
  <h1>NX 8.5 - 运动仿真 - [(仿真) motion_1.sim （修改的） ]</h1>
  <span class="brand">SIEMENS</span>
  <div class="winbtns">
    <button aria-label="最小化"><svg viewBox="0 0 16 16"><path d="M4 12h6" stroke="#fff" stroke-width="2"/></svg></button>
    <button aria-label="还原"><svg viewBox="0 0 16 16"><path d="M6 5V3h7v6h-2M3 6h7v6H3z" fill="none" stroke="#fff" stroke-width="1.500"/></svg></button>
    <button class="close" aria-label="关闭"><svg viewBox="0 0 16 16"><path d="M3 3l10 10M13 3L3 13" stroke="#fff" stroke-width="2"/></svg></button>
  </div>
</header>

<nav class="menubar">
  <span class="grip"></span>
  <svg class="i16"><use href="#solve"/></svg>
  <ul>
    <li><a href="#">文件(<u>F</u>)</a></li><li><a href="#">编辑(<u>E</u>)</a></li><li><a href="#">视图(<u>V</u>)</a></li><li><a href="#">插入(<u>S</u>)</a></li><li><a href="#">格式(<u>R</u>)</a></li><li><a href="#">工具(<u>T</u>)</a></li><li><a href="#">装配(<u>A</u>)</a></li><li><a href="#">信息(<u>I</u>)</a></li><li><a href="#">分析(<u>L</u>)</a></li><li><a href="#">首选项(<u>P</u>)</a></li><li><a href="#">帮助(<u>H</u>)</a></li>
  </ul>
  <div class="mdibtns">
    <button aria-label="最小化"><svg viewBox="0 0 16 16"><path d="M4 12h6" stroke="#444" stroke-width="2"/></svg></button>
    <button aria-label="还原"><svg viewBox="0 0 16 16"><path d="M6 5V3h7v6h-2M3 7h7v5H3z" fill="none" stroke="#444" stroke-width="1.500"/></svg></button>
    <button disabled aria-label="关闭"><svg viewBox="0 0 16 16"><path d="M4 4l8 8M12 4l-8 8" stroke="#bbb" stroke-width="2"/></svg></button>
  </div>
</nav>

<section class="toolbars">
  <div class="tbrow">
    <div class="tb">
      <span class="grip"></span>
      <button class="txt start"><svg><use href="#nx"/></svg>开始</button><i class="arr"></i>
      <button><svg><use href="#save"/></svg></button><hr>
      <button><svg><use href="#cut"/></svg></button><button><svg><use href="#copy"/></svg></button><button><svg><use href="#paste"/></svg></button><button><svg><use href="#del"/></svg></button><hr>
      <button><svg><use href="#undo"/></svg></button><hr>
      <button class="txt find"><svg><use href="#binoc"/></svg>命令查找器</button><button class="fx">f(x)</button><i class="arr"></i><hr>
      <button><svg><use href="#inf1"/></svg></button><hr>
      <button><svg><use href="#inf2"/></svg></button><i class="arr low"></i>
    </div>
    <div class="tb">
      <span class="grip"></span>
      <button><svg><use href="#fit"/></svg></button><i class="arr"></i><button><svg><use href="#lap"/></svg></button><i class="arr"></i><button><svg><use href="#cube"/></svg></button><i class="arr"></i>
      <button><svg><use href="#clipo"/></svg></button><button><svg><use href="#clipb"/></svg></button><i class="arr"></i><button><svg><use href="#win"/></svg></button><i class="arr"></i><hr>
      <button><svg><use href="#exit1"/></svg></button><button><svg><use href="#exit"/></svg></button><i class="arr low"></i>
    </div>
    <div class="tb">
      <span class="grip"></span>
      <button><svg><use href="#layers"/></svg></button><button><svg><use href="#wcs"/></svg></button><i class="arr"></i><hr>
      <button><svg><use href="#dhand"/></svg></button><button><svg><use href="#dkey"/></svg></button><hr>
      <button><svg><use href="#dplay"/></svg></button><i class="arr"></i><hr>
      <button><svg><use href="#meas"/></svg></button><i class="arr"></i><button><svg><use href="#ruler"/></svg></button><i class="arr low"></i>
    </div>
  </div>
  <div class="tbrow">
    <div class="tb">
      <span class="grip"></span>
      <button><svg><use href="#calcl"/></svg></button><button><svg><use href="#lcube"/></svg></button><hr>
      <button class="fx">f(x)</button><button><svg><use href="#link"/></svg></button><button><svg><use href="#joint"/></svg></button>
      <button><svg><use href="#gears"/></svg></button><i class="arr"></i><button><svg><use href="#spring"/></svg></button><i class="arr"></i><button><svg><use href="#curve"/></svg></button><i class="arr"></i><button><svg><use href="#force"/></svg></button><i class="arr"></i><button><svg><use href="#bulb"/></svg></button><i class="arr"></i><hr>
      <button><svg><use href="#rjoint"/></svg></button><hr><button><svg><use href="#pill"/></svg></button><hr><button><svg><use href="#arm"/></svg></button><hr>
      <button><svg><use href="#over"/></svg></button><i class="arr"></i><hr><button><svg><use href="#orbit"/></svg></button><i class="arr"></i><hr><button><svg><use href="#gcurve"/></svg></button><i class="arr"></i><hr>
      <button><svg><use href="#armok"/></svg></button><hr><button><svg><use href="#calch"/></svg></button><button><svg><use href="#calc"/></svg></button><hr>
      <button><svg><use href="#solve"/></svg></button><i class="arr"></i><i class="arr low"></i>
    </div>
    <div class="tb">
      <span class="grip"></span>
      <button><svg><use href="#gwr"/></svg></button><i class="arr"></i><button><svg><use href="#gmag"/></svg></button><i class="arr"></i><button><svg><use href="#gx"/></svg></button><i class="arr"></i>
      <button><svg><use href="#al"/></svg></button><button><svg><use href="#ar"/></svg></button><i class="arr low"></i>
    </div>
    <div class="tb">
      <span class="grip"></span>
      <button class="nar"><svg><use href="#rew"/></svg></button><button class="nar"><svg><use href="#back"/></svg></button><button class="nar playbtn"><svg><use href="#play"/></svg></button><button class="nar"><svg><use href="#step"/></svg></button><button class="nar"><svg><use href="#ff"/></svg></button><button class="nar"><svg><use href="#pause"/></svg></button><button><svg><use href="#cam"/></svg></button><button><svg><use href="#stop"/></svg></button><hr>
      <span class="combo speed"><select aria-label="速度"><option>1</option></select><b><svg><use href="#dd"/></svg></b></span>
      <button><svg class="i16"><use href="#gtri"/></svg></button><button><svg class="i20"><use href="#axis"/></svg></button><button><svg><use href="#flag"/></svg></button><i class="arr low"></i>
    </div>
  </div>
  <div class="tbrow">
    <div class="tb">
      <span class="grip"></span>
      <button><svg><use href="#blank"/></svg></button><i class="arr"></i><button><svg><use href="#gridc"/></svg></button><button><svg><use href="#redo"/></svg></button><i class="arr low"></i>
    </div>
  </div>
</section>

<section class="selbar">
  <span class="combo off filter"><select disabled aria-label="过滤器"><option>没有选择过滤器</option></select><b><svg><use href="#dd"/></svg></b></span>
  <span class="combo off scope"><select disabled aria-label="范围"><option>整个装配</option></select><b><svg><use href="#dd"/></svg></b></span>
  <button><svg><use href="#gfind"/></svg></button><hr>
  <button><svg><use href="#funl"/></svg></button><button><svg><use href="#snap"/></svg></button><i class="arr"></i><button><svg><use href="#gtarget"/></svg></button><button><svg><use href="#gham"/></svg></button><hr>
  <button><svg><use href="#rect"/></svg></button><i class="arr"></i><hr>
  <button><svg><use href="#rock"/></svg></button><button><svg><use href="#scube"/></svg></button>
  <i class="arr low last"></i>
</section>

<section class="prompt">
  <p>管理数学或表函数</p><p class="status"></p><span></span><span class="mid"></span>
  <svg class="i16" viewBox="0 0 16 16"><path d="M1 4V1h3M12 1h3v3M1 12v3h3M12 15h3v-3" fill="none" stroke="#333" stroke-width="1.500"/><path d="M4 3h8v10H4z" fill="#fff" stroke="#446"/><path d="M6 5h5v6H6z" fill="#38c"/></svg>
</section>

<main class="work">
  <nav class="resbar">
    <button class="on"><svg><use href="#s-nav"/></svg></button><button><svg><use href="#s-mesh"/></svg></button><button><svg><use href="#s-con"/></svg></button><button><svg><use href="#s-part"/></svg></button><button><svg><use href="#s-xy"/></svg></button><button><svg><use href="#s-books"/></svg></button>
    <button class="apart"><svg><use href="#s-info"/></svg></button><button class="apart"><svg><use href="#s-web"/></svg></button><button class="apart"><svg><use href="#s-clock"/></svg></button><button><svg><use href="#s-door"/></svg></button><button><svg><use href="#s-wand"/></svg></button><button><svg><use href="#s-ppl"/></svg></button><button><svg><use href="#s-pic"/></svg></button>
  </nav>

  <aside class="navigator">
    <h2><svg viewBox="0 0 12 12"><path d="M1 11l3-3" stroke="#111" stroke-width="1.500"/><path d="M2 5l5-4h3l1 3-1 3-5 3-3-2z" fill="#e8e4b0" stroke="#111" stroke-width="1.500"/><circle cx="5" cy="6" r="1.500"/></svg>运动导航器</h2>
    <div class="treebox">
      <div class="colhead">名称</div>
      <ul class="tree">
        <li><div class="row root"><svg><use href="#t-root"/></svg>planet</div></li>
        <li><div class="row"><i class="ex minus"></i><i class="stub"></i><svg><use href="#t-mot"/></svg>motion_1</div>
          <ul>
            <li><label class="row"><i class="ex"></i><i class="stub"></i><input type="checkbox" checked><svg><use href="#link"/></svg>Links</label></li>
            <li><label class="row"><i class="ex"></i><i class="stub"></i><input type="checkbox" checked><svg><use href="#joint"/></svg>Joints</label></li>
            <li><label class="row"><i class="ex"></i><i class="stub"></i><input type="checkbox" checked><svg><use href="#t-mark"/></svg>Markers</label></li>
            <li><div class="row"><i class="ex"></i><i class="stub"></i><svg><use href="#t-sens"/></svg>Sensors</div></li>
            <li><div class="row"><i class="ex"></i><i class="stub"></i><svg><use href="#t-trace"/></svg>Trace</div></li>
            <li><label class="row"><i class="ex minus"></i><i class="stub"></i><input type="checkbox" checked><svg><use href="#force"/></svg>Load Container</label>
              <ul><li><label class="row"><i class="leaf"></i><input type="checkbox" checked><svg><use href="#force"/></svg>F001</label></li></ul></li>
            <li class="end"><div class="row active"><i class="ex minus"></i><i class="stub"></i><svg><use href="#solve"/></svg>Solution_1</div>
              <ul>
                <li class="end"><div class="row"><i class="ex minus"></i><i class="stub"></i><svg><use href="#t-res"/></svg>Results</div>
                  <ul>
                    <li><div class="row"><i class="ex"></i><i class="stub"></i><svg><use href="#solve"/></svg>Animation</div></li>
                    <li><div class="row"><i class="ex"></i><i class="stub"></i><svg><use href="#t-xy"/></svg>XY-Graphing</div></li>
                    <li><div class="row"><i class="leaf"></i><svg><use href="#t-load"/></svg>Load Transfer</div></li>
                  </ul></li>
              </ul></li>
          </ul></li>
      </ul>
      <div class="hscroll"><button class="l"></button><span class="thumb third"></span><button class="r"></button></div>
    </div>
    <div class="splitter"><span></span></div>
    <button class="fold">预览<span><svg><use href="#dn"/></svg></span></button>
    <button class="fold">模态形状局部放大图<span><svg><use href="#dn"/></svg></span></button>
  </aside>

  <section class="parts">
    <div class="dots"></div>
    <div class="treebox">
      <div class="colhead">描述性部件名</div>
      <div class="partbody">
      <ul class="tree linked">
        <li><div class="row"><i class="leaf"></i><svg><use href="#t-folder"/></svg><span class="cn">会话组件组</span></div></li>
        <li><div class="row"><i class="leaf"></i><svg><use href="#t-folder"/></svg><span class="cn">部件中的组件组</span></div></li>
        <li><div class="row"><i class="leaf"></i><svg><use href="#t-folder"/></svg><span class="cn">截面</span></div></li>
        <li><label class="row"><i class="ex minus"></i><i class="stub"></i><input type="checkbox" checked><svg><use href="#t-asm"/></svg>motion_1</label>
          <ul><li><label class="row"><i class="leaf"></i><input type="checkbox" checked><svg><use href="#t-cube"/></svg>planet</label></li></ul></li>
      </ul>
      <div class="cols"><span></span><span></span><span></span><span></span><span></span></div>
      </div>
      <div class="hscroll"><button class="l"></button><span class="thumb most"></span><button class="r"></button></div>
    </div>
    <div class="splitter wide"><span></span></div>
  </section>

  <section class="view">
    <svg viewBox="930 202 990 797" preserveAspectRatio="xMidYMid slice">
      <circle cx="1425" cy="602" r="384" fill="none" stroke="#4660e0" stroke-width="2"/>
      <g stroke="#6d6e70" stroke-width="1.500"><path d="M1425 218v330M1425 218l-38 39M1425 218l38 39M1387 565l22 22M1463 565l-22 22"/></g>
      <g fill="url(#gBall)"><circle cx="1376" cy="233" r="9.500"/><circle cx="1348" cy="246" r="9.500"/><circle cx="1321" cy="266" r="9.500"/><circle cx="1298" cy="294" r="9.500"/><circle cx="1276" cy="328" r="9.500"/><circle cx="1260" cy="371" r="9.500"/><circle cx="1265" cy="556" r="9.500"/><circle cx="1314" cy="636" r="9.500"/><circle cx="1420" cy="686" r="9.500"/><circle cx="1531" cy="641" r="9.500"/><circle cx="1583" cy="563" r="9.500"/><circle cx="1603" cy="490" r="9.500"/><circle cx="1604" cy="427" r="9.500"/><circle cx="1595" cy="375" r="9.500"/><circle cx="1579" cy="331" r="9.500"/><circle cx="1559" cy="295" r="9.500"/><circle cx="1535" cy="267" r="9.500"/><circle cx="1510" cy="246" r="9.500"/><circle cx="1482" cy="230" r="9.500"/><circle cx="1454" cy="221" r="9.500"/><circle cx="1425" cy="218" r="9.500"/><circle cx="1425" cy="602" r="24"/></g>
      <path d="M1434 214h22l8 6-30-2z" fill="#e2d9a0"/><path d="M1433 213h23" stroke="#4a9a40" stroke-width="6" stroke-dasharray="3 1"/><path d="M1464 217h8l1-3 24 4-24 5-1-3h-8z" fill="#a0683c"/><circle cx="1425" cy="218" r="3.500" fill="#4a3410"/><path d="M1425 203v8" stroke="#a0683c" stroke-width="2"/>
      <g fill="none" stroke="#2020b8" stroke-width="1.500"><path d="M1425 602V510M1425 552.500h51V602M1425 602h92"/></g>
      <path d="M1425 502l3 12h-6zM1525 602.500l-12 3v-6z" fill="#1818b0"/><path d="M1425 567l3 16h-6z" fill="#2038d8"/><circle cx="1425" cy="602" r="3" fill="#10108a"/>
      <path d="M1440 603h15M1465 602.500l-13-2.500v5z" stroke="#207a48" fill="#207a48"/>
      <g class="lbl"><text x="1422" y="501" fill="#2a2ab0">Z</text><text x="1527" y="606" fill="#2a2ab0">Y</text><text x="1429" y="559" fill="#2a48d0">ZC</text><text x="1426" y="602" fill="#c02818">XC</text><text x="1454" y="599" fill="#2c8050">YC</text><text x="1425" y="410" fill="#3a8a5a">L002</text><text x="984" y="902" fill="#2a2ad0">Z</text><text x="1024" y="944" fill="#3a9a4a">Y</text><text x="933" y="994" fill="#dc9a5a">MODEL_1 工作</text></g>
      <path d="M1446 601l2-4 2 3 2-3 2 3" fill="none" stroke="#2c8050"/>
      <path d="M987 917h23v22h-23z" fill="#ccd0d0" stroke="#b8bcbc"/><path d="M986.500 940V914" stroke="#2a2ad0" stroke-width="1.500"/><path d="M986.500 904l3 12h-6z" fill="#2a2ad0"/><path d="M986 940.500h22" stroke="#288a38" stroke-width="1.500"/><path d="M1024 940.500l-16 3v-6z" fill="#288a38"/><circle cx="987" cy="940.500" r="3" fill="#b02a34"/>
    </svg>
  </section>

  <div class="dialog" role="dialog" aria-labelledby="dlg">
    <div class="dtitle">
      <button aria-label="设置"><svg viewBox="0 0 16 16"><circle cx="8" cy="8" r="4" fill="none" stroke="#fff" stroke-width="2.500"/><circle cx="8" cy="8" r="6" fill="none" stroke="#fff" stroke-width="2" stroke-dasharray="2.500 2.200"/></svg></button>
      <h2 id="dlg"><span>XY</span> 函数管理器</h2>
      <button aria-label="关闭"><svg viewBox="0 0 16 16"><path d="M3 3l9 10M12 3L3 13" stroke="#fff" stroke-width="3"/></svg></button>
    </div>
    <div class="dbody">
      <button class="fold">函数属性<span><svg><use href="#up"/></svg></span></button>
      <div class="props">
        <div class="radios"><label><input type="radio" name="k" checked>数学</label><label><input type="radio" name="k">AFU 格式的表</label></div>
        <div class="field"><label for="use">用途</label><span class="combo use"><select id="use"><option>运动</option></select><b><svg><use href="#dd"/></svg></b></span></div>
        <div class="field"><label for="ft">函数类型</label><span class="combo ft"><select id="ft"><option>时间</option></select><b><svg><use href="#dd"/></svg></b></span></div>
      </div>
      <div class="gridbox">
        <table>
          <thead><tr><th class="c1">名称<svg><path d="M0 7h12L6 0z"/></svg></th><th class="c2">公式</th><th class="c3">数据类型</th><th>横坐标类型</th></tr></thead>
          <tbody>
            <tr class="sel"><td>F001_Math</td><td>-g*m1*m2/Se001/Se001</td><td>Time</td><td>Time</td></tr>
            <tr><td></td><td></td><td></td><td></td></tr><tr><td></td><td></td><td></td><td></td></tr><tr><td></td><td></td><td></td><td></td></tr><tr><td></td><td></td><td></td><td></td></tr><tr><td></td><td></td><td></td><td></td></tr><tr><td></td><td></td><td></td><td></td></tr><tr><td></td><td></td><td></td><td></td></tr><tr><td></td><td></td><td></td><td></td></tr><tr><td></td><td></td><td></td><td></td></tr><tr><td></td><td></td><td></td><td></td></tr><tr><td></td><td></td><td></td><td></td></tr><tr><td></td><td></td><td></td><td></td></tr>
          </tbody>
        </table>
        <div class="hscroll"><button class="l"></button><span class="thumb dlgthumb"></span><button class="r"></button></div>
      </div>
      <div class="dtools">
        <button aria-label="新建"><svg viewBox="0 0 24 24"><path d="M2 1v21h21" stroke="#111" stroke-width="1.500" fill="none" stroke-dasharray="3 1"/><path d="M3 19c0-5 4-8 9-8" stroke="#d33" stroke-width="1.500" fill="none"/><path d="M12 12L22 2" stroke="#111" stroke-width="5"/><path d="M13 11l8-8" stroke="#f4e078" stroke-width="3"/></svg></button>
        <button aria-label="编辑"><svg viewBox="0 0 24 24"><path d="M12 1h11v14H12z" fill="#fff" stroke="#111" stroke-width="1.500"/><path d="M15 4h2v3h-2zM15 9h2v3h-2zM19 4h1v3h-1zM19 9h1v3h-1z" fill="#247"/><path d="M2 22L12 11" stroke="#111" stroke-width="5"/><path d="M2 22l9-10" stroke="#d8cf9a" stroke-width="3"/></svg></button>
        <button aria-label="复制"><svg viewBox="0 0 24 24"><path d="M1 1h8l4 4v12H1z" fill="#fff" stroke="#111" stroke-width="1.500"/><path d="M10 7h8l5 5v11H10z" fill="#fff" stroke="#111" stroke-width="1.500"/><path d="M3 6h7M3 9h6M3 12h6M12 13h8M12 16h8M12 19h8" stroke="#111"/></svg></button>
        <button aria-label="删除"><svg viewBox="0 0 24 24"><path d="M4 4l15 17M20 4C13 9 9 14 5 21" fill="none" stroke="#000" stroke-width="3"/></svg></button>
      </div>
      <button class="fold">预览<span><svg><use href="#dn"/></svg></span></button>
      <div class="actions"><button class="ok">确定</button><button>返回</button><button>取消</button></div>
    </div>
  </div>
</main>

<section class="bottombar">
  <div class="tb">
    <span class="grip"></span>
    <button><svg><use href="#b1"/></svg></button><button><svg><use href="#b2"/></svg></button><i class="arr"></i><hr>
    <button><svg><use href="#b3"/></svg></button><button><svg><use href="#b4"/></svg></button><button><svg><use href="#b5"/></svg></button><hr>
    <button><svg><use href="#b6"/></svg></button><button><svg><use href="#b7"/></svg></button><hr>
    <button class="nar"><svg><use href="#b8"/></svg></button><i class="arr"></i><i class="arr low"></i>
  </div>
</section>

<footer class="taskbar">
  <button class="raised go"><svg><use href="#k-win"/></svg>开始</button>
  <button class="quick"><svg><use href="#k-m"/></svg></button>
  <button class="raised task now"><svg><use href="#nx"/></svg>NX 8.5 - 运动...</button>
  <button class="raised task"><svg><use href="#k-paint"/></svg>1.jpg - 画图</button>
  <button class="quick"><svg><use href="#nx"/></svg></button>
  <button class="quick"><svg><use href="#k-note"/></svg></button>
  <button class="quick"><svg><use href="#nx"/></svg></button>
  <button class="quick"><svg><use href="#k-xl"/></svg></button>
  <button class="quick"><svg><use href="#k-sw"/></svg></button>
  <button class="quick"><svg><use href="#k-calc"/></svg></button>
  <button class="quick raised"><svg><use href="#k-ds"/></svg></button>
  <button class="quick"><svg><use href="#k-wd"/></svg></button>
  <button class="quick"><svg><use href="#k-wheel"/></svg></button>
  <div class="ime"><svg><use href="#k-s"/></svg></div>
  <div class="tray">
    <svg><use href="#k-t1"/></svg><svg><use href="#k-t2"/></svg><svg><use href="#k-t3"/></svg><svg><use href="#k-t4"/></svg><svg><use href="#k-t5"/></svg>
    <time>13:08<br>2017/7/7</time>
    <svg><use href="#k-mon"/></svg>
  </div>
</footer>

<svg class="mark" viewBox="0 0 290 96">
  <path d="M45 1l37 20v40L45 82 8 61V21z" fill="#8ccbe8" opacity=".65"/><path d="M45 14l25 14v27L45 69 20 55V28z" fill="none" stroke="#e6f3f9" stroke-width="4" opacity=".8"/><path d="M45 29l13 7v15l-13 7-13-7V36z" fill="#4aa3cf" opacity=".8"/>
  <text x="86" y="54" class="m3">3D世界网</text>
  <path d="M40 12l7 4v54l-7-4z" fill="#2b80aa"/><path d="M113 12l-7 4v46l7-4z" fill="#2b80aa"/><path d="M40 12l6-1 31 19 30-19 6 1-36 24z" fill="#55c2f2"/><path d="M40 66l7-5 27 11v8zM113 58l-7-3-24 18v9z" fill="#3aa4d6"/>
  <path d="M71 78V44l21-8v38h-6V46l-8 3v28z" fill="#fb8a0c" stroke="#fb8a0c" stroke-width="2"/><circle cx="90" cy="57" r="3.500" fill="#e52020"/>
  <text x="106" y="67" class="m4">WWW.3DSJW.COM</text>
  <text x="125" y="52" class="m1">PLM</text><text x="207" y="50" class="m2">之家</text><circle cx="222" cy="24" r="4" fill="#f01818"/>
  <text x="126" y="76" class="m5">www.plmhome.com</text>
</svg>
</body>
</html>
```
FILE: styles.css
```css
* { box-sizing: border-box; }
body {
  margin: 0; min-height: 100vh; display: flex; flex-direction: column; position: relative;
  font: 12px/16px "Noto Sans", "Noto Sans CJK SC", sans-serif; color: #111; background: #ebebeb; overflow-x: hidden;
}
h1, h2, p, ul { margin: 0; padding: 0; font-size: 12px; }
ul { list-style: none; }
button { font: inherit; color: inherit; padding: 0; border: 0; background: none; }
svg { display: block; flex: none; }
.sprite { position: absolute; width: 0; height: 0; }
.i16 { width: 16px; height: 16px; }
.i20 { width: 20px; height: 20px; }

/* title and menu */
.titlebar {
  height: 21px; display: flex; align-items: center; padding: 0 1px 0 2px; gap: 2px; color: #fff;
  background: linear-gradient(#000 1px, #6a6a70 1px, #45454a 8px, #1c1c1c 8px, #181818 20px, #000 20px);
}
.titlebar h1 { flex: 1; font: bold 12px/20px "Liberation Mono", "Noto Sans CJK SC", monospace; white-space: pre; }
.brand { font: bold 14px/20px "Liberation Sans", sans-serif; margin-right: 22px; }
.winbtns, .mdibtns { display: flex; gap: 3px; }
.winbtns button { width: 18px; height: 18px; border: 1px solid #777; border-radius: 3px; background: linear-gradient(#777, #2a2a2a); }
.winbtns .close { background: linear-gradient(#f0a090, #c83a22); border-color: #d88; }
.winbtns svg, .mdibtns svg { width: 16px; height: 16px; }
.menubar { height: 27px; display: flex; align-items: center; padding-right: 5px; background: linear-gradient(#e8e8e8, #dfdfdf); border-bottom: 1px solid #bbb; }
.menubar ul { display: flex; gap: 11px; margin-left: 6px; flex: 1; font-family: "Noto Sans CJK SC", sans-serif; }
.menubar a { color: #111; text-decoration: none; }
.mdibtns { gap: 2px; }
.mdibtns button { width: 17px; height: 18px; border: 1px solid #777; border-radius: 3px; background: linear-gradient(#fff, #ddd); }
.mdibtns svg { width: 15px; }
.mdibtns button:disabled { border-color: #bbb; }
.grip { width: 8px; height: 24px; flex: none; background: radial-gradient(circle, #aaa 1px, transparent 2px) 3px 0 / 4px 5px repeat-y; }

/* toolbars */
.toolbars { background: linear-gradient(#e2e2e2, #cacaca); border-bottom: 1px solid #999; }
.tbrow { display: flex; height: 34px; }
.tb { display: flex; align-items: center; height: 34px; border: 1px solid; border-color: #f4f4f4 #b9b9b9 #bcbcbc transparent; border-left: 0; padding-right: 2px; background: linear-gradient(#e2e2e2, #d2d2d2); }
.tb button { width: 31px; height: 30px; display: flex; align-items: center; justify-content: center; }
.tb button svg { width: 24px; height: 24px; }
.tb button svg.i16 { width: 16px; height: 16px; }
.tb button svg.i20 { width: 20px; height: 20px; }
.tb .txt { width: auto; gap: 4px; padding-left: 3px; }
.tb .nar { width: 27px; }
.tb .playbtn { margin: 0 8px 0 12px; }
.tb .fx { font: italic bold 14px/20px "Liberation Serif", serif; color: #2a2358; }
.tb .find { padding-right: 5px; }
hr { width: 6px; height: 30px; margin: 0; flex: none; border: 0; background: linear-gradient(90deg, transparent 2px, #b2b2b2 2px, #b2b2b2 3px, #f6f6f6 3px, #f6f6f6 4px, transparent 4px); }
.arr { width: 12px; height: 4px; flex: none; background: #111; clip-path: polygon(3px 0, 9px 0, 6px 4px); }
.arr.low { align-self: flex-end; margin-bottom: 5px; width: 11px; }

.combo { display: flex; height: 20px; border: 1px solid #777; border-radius: 3px; background: #fff; overflow: hidden; flex: none; }
.combo select { flex: 1; min-width: 0; appearance: none; border: 0; background: none; font: inherit; color: #111; padding: 0 3px; border-radius: 0; }
.combo b { width: 16px; display: flex; align-items: center; justify-content: center; border-left: 1px solid #6a8fb8; background: linear-gradient(#d8ecff, #68aee8); }
.combo b svg { width: 10px; height: 7px; }
.combo.off { background: #d4d4d4; border-color: #999; }
.combo.off select { color: #8a8a8a; opacity: 1; }
.combo.off b { background: #e4e4e4; border-color: #aaa; fill: #888; }
.speed { width: 47px; height: 21px; margin: 0 2px 0 8px; }
.selbar { height: 30px; display: flex; align-items: center; padding-left: 5px; background: linear-gradient(#c6c6c6, #dcdcdc 60%, #dadada); border-bottom: 1px solid #b5b5b5; }
.selbar button { width: 24px; display: flex; justify-content: center; }
.selbar button svg { width: 17px; height: 17px; }
.selbar .arr { margin-left: -5px; }
.filter { width: 142px; margin-right: 8px; }
.scope { width: 150px; margin-right: 4px; }
.selbar .last { margin-left: auto; margin-right: 2px; }
.prompt { height: 21px; display: flex; border-top: 1px solid #f4f4f4; border-bottom: 1px solid #8a8a8a; background: #d9d9d9; align-items: stretch; padding-right: 3px; }
.prompt p { flex: 0 0 48%; padding-left: 3px; font-weight: bold; font-size: 13px; line-height: 18px; font-family: "Noto Sans CJK SC", sans-serif; }
.prompt .status { flex: 1; border-left: 1px solid #fff; }
.prompt span { width: 20px; border-left: 1px solid #fff; }
.prompt .mid { width: 35px; border-right: 1px solid #fff; }
.prompt svg { margin: 2px 0 0 4px; }

/* work area */
.work { flex: 1; display: flex; position: relative; min-height: 700px; }
.resbar { width: 33px; background: linear-gradient(90deg, #b4b4b4, #a2a2a2); padding-top: 16px; display: flex; flex-direction: column; align-items: flex-end; gap: 3px; border-right: 1px solid #777; }
.resbar button { width: 27px; height: 39px; border: 1px solid #666; border-right: 0; border-radius: 4px 0 0 4px; background: linear-gradient(90deg, #e2e2e2, #cfcfcf); display: flex; align-items: center; justify-content: center; }
.resbar .on { width: 29px; height: 43px; background: #ebebeb; }
.resbar .apart { margin-top: 11px; }
.resbar svg { width: 22px; height: 23px; }
.navigator { width: 341px; padding: 4px 10px 5px 9px; display: flex; flex-direction: column; border-right: 2px solid #777; background: #ebebeb; }
.navigator h2 { height: 28px; display: flex; align-items: center; gap: 13px; padding: 0 0 4px 6px; font: bold 13px/20px "Noto Sans CJK SC", sans-serif; }
.navigator h2 svg { width: 11px; height: 11px; }
.treebox { flex: 1; border: 1px solid #666; border-left-width: 2px; background: #fff; display: flex; flex-direction: column; }
.colhead { height: 20px; border-bottom: 1px solid #888; padding-left: 5px; line-height: 20px; background: linear-gradient(#f2f2f2 50%, #dadcdd 50%, #d6d8da); flex: none; }
.tree { flex: 1; position: relative; background: repeating-linear-gradient(#fff 0, #fff 19px, #e4e4e4 19px, #e4e4e4 20px, #f6f6f6 20px, #f6f6f6 39px, #e4e4e4 39px, #e4e4e4 40px); font-size: 13px; }
.row { display: flex; height: 20px; align-items: center; padding-left: 4px; color: #3c3c3c; line-height: 18px; }
.row svg { width: 16px; height: 16px; margin-right: 2px; }
.row.root { padding-left: 1px; }
.row.active { color: #2218b8; }
.cn { font-size: 12px; }
.tree ul { padding-left: 19px; position: relative; }
.tree ul::before, .linked::before { content: ""; position: absolute; left: 27px; top: 0; bottom: 10px; border-left: 1px dotted #888; }
.tree ul:has(> .end:last-child)::before { bottom: auto; height: 150px; }
.tree ul ul:has(> .end:last-child)::before { height: 10px; }
.linked::before { left: 8px; top: 10px; bottom: auto; height: 60px; }
.ex { position: relative; width: 9px; height: 9px; border: 1px solid #888; border-radius: 2px; background: linear-gradient(#222, #222) center / 5px 1px no-repeat, linear-gradient(#222, #222) center / 1px 5px no-repeat, #fff; flex: none; }
.ex.minus { background: linear-gradient(#222, #222) center / 5px 1px no-repeat, #fff; }
.stub { width: 5px; margin: 0 1px; border-top: 1px dotted #888; }
.leaf { width: 10px; margin: 0 2px 0 4px; border-top: 1px dotted #888; }
input[type=checkbox] { appearance: none; width: 13px; height: 13px; margin: 0 3px 0 0; border: 1px solid #222; background: #fff; flex: none; }
input[type=checkbox]:checked::before { content: ""; display: block; width: 11px; height: 11px; background: #c41c20; clip-path: polygon(0 4px, 3px 4px, 5px 7px, 10px 0, 11px 3px, 5px 11px, 3px 11px); }
.hscroll { height: 17px; display: flex; flex: none; padding: 0 1px 1px; background: repeating-conic-gradient(#d4d0c8 0 25%, #fff 0 50%) 0 0 / 2px 2px; }
.hscroll button { width: 16px; border: 1px solid; border-color: #fff #555 #555 #fff; background: #d4d0c8; display: flex; align-items: center; justify-content: center; }
.hscroll button::before { content: ""; border: 4px solid transparent; border-left: 0; border-right: 5px solid #000; }
.hscroll .r { margin-left: auto; }
.hscroll .r::before { border-left: 5px solid #000; border-right: 0; }
.thumb { background: #d4d0c8; border: 1px solid; border-color: #fff #555 #555 #fff; box-shadow: inset -1px -1px #999; }
.third { width: 30%; }
.most { width: 77%; }
.dlgthumb { width: 78%; }
.splitter { height: 12px; display: flex; align-items: center; gap: 4px; }
.splitter::before, .splitter::after { content: ""; flex: 1; height: 2px; background: linear-gradient(#bbb 50%, #fff 50%); }
.splitter span { width: 57px; height: 6px; background: #d0d0d0; border: 1px solid; border-color: #fff #999 #999 #fff; }
.splitter.wide span { width: 102px; }
.fold { height: 23px; width: 100%; display: flex; flex: none; align-items: center; text-align: left; padding-left: 6px; justify-content: space-between; font: bold 13px/18px "Noto Sans CJK SC", sans-serif; border-bottom: 1px solid #888; border-right: 1px solid #999; border-top: 1px solid #fff; background: linear-gradient(#f6f7f7 50%, #dfe1e2 50%, #d6d9da); }
.fold span { width: 23px; align-self: stretch; display: flex; align-items: center; justify-content: center; border-left: 1px solid #999; }
.fold svg { width: 12px; height: 12px; }

.parts { width: 556px; padding: 10px 10px 7px 4px; display: flex; flex-direction: column; }
.dots { height: 4px; margin: 0 0 9px 5px; background: radial-gradient(circle, #aaa 1px, transparent 2px) 0 0 / 4px 4px; }
.partbody { flex: 1; display: flex; position: relative; }
.parts .colhead { padding-left: 6px; line-height: 22px; }
/* column rulings of the part table */
.cols { position: absolute; right: 29px; top: 0; bottom: 0; display: flex; }
.cols span { width: 24px; border-left: 1px solid #e4e4e4; }
.cols span:first-child { width: 36px; border-left: 1px solid #000; }
.cols span:last-child { width: 1px; }
.parts .splitter { height: 11px; margin-top: 1px; }

.view { flex: 1; min-width: 0; border: 1px solid #dd9f66; background: linear-gradient(#b6b7b9, #e4e6e7 70%, #e8e9ea); position: relative; overflow: hidden; }
.view svg { width: 100%; height: 100%; }
.lbl { font: 10px "Liberation Sans", "Noto Sans CJK SC", sans-serif; }

/* dialog */
.dialog { position: absolute; left: 688px; top: 2px; width: 570px; background: #ebebeb; border: 1px solid #777; border-top: 0; border-bottom: 8px solid #1c1c1c; border-radius: 0 0 6px 6px; }
.dtitle { height: 22px; display: flex; align-items: stretch; color: #fff; background: linear-gradient(#8a8a8e, #505054 3px, #3c3c40 10px, #191919 10px); border-bottom: 1px solid #777; }
.dtitle button { width: 20px; display: flex; align-items: center; justify-content: center; border-left: 1px solid #aaa; }
.dtitle button:first-child { border-left: 0; border-right: 1px solid #aaa; }
.dtitle button svg { width: 14px; height: 14px; }
.dtitle h2 { flex: 1; padding-left: 9px; font: bold 16px/18px "Noto Sans CJK SC", sans-serif; }
.dtitle h2 span { font: bold 14px/18px "Noto Sans", sans-serif; }
.dbody { padding: 3px 6px 11px 5px; }
.props { height: 96px; padding: 7px 9px 0 8px; background: #d4d4d4; border: 1px solid #999; border-bottom-color: #f4f4f4; }
.radios { width: 223px; height: 29px; margin: 0 auto; display: flex; align-items: center; background: #c9c9c9; border: 1px solid; border-color: #888 #f4f4f4 #f4f4f4 #888; }
.radios label { width: 108px; display: flex; align-items: center; gap: 2px; padding-left: 4px; white-space: nowrap; }
input[type=radio] { appearance: none; width: 16px; height: 16px; margin: 0; border: 1px solid #777; border-radius: 50%; background: linear-gradient(#ccc, #f4f4f4); }
input[type=radio]:checked { background: radial-gradient(circle, #123a70 3px, #8fd4f8 4px, #5ab8ec 7px); border-color: #1a6a9a; }
.field { display: flex; justify-content: space-between; align-items: center; margin-top: 4px; }
.use { width: 72px; }
.ft { width: 185px; }
.gridbox { margin: 2px 5px 0 4px; border: 1px solid #666; border-left: 2px solid #777; border-top: 2px solid #777; background: #fff; }
table { width: 100%; table-layout: fixed; border-collapse: collapse; }
th, td { padding: 0 0 0 5px; height: 20px; text-align: left; font-weight: normal; white-space: nowrap; overflow: hidden; border-right: 1px solid #e0e0e0; line-height: 18px; }
th { height: 19px; padding-left: 6px; border-right-color: #999; border-bottom: 1px solid #888; background: linear-gradient(#f2f2f2 50%, #dadcdd 50%, #d6d8da); }
th svg { display: inline-block; width: 12px; height: 7px; margin: 0 0 3px 14px; }
th:last-child, td:last-child { border-right: 0; padding-right: 0; }
.c1 { width: 100px; }
.c2 { width: 255px; }
.c3 { width: 120px; }
tbody td { border-bottom: 1px solid #e0e0e0; }
tbody tr:nth-child(even) { background: #f6f6f6; }
tbody tr.sel { background: #0a246a; color: #e8e8f4; }
.sel td { border-right-color: #fff; padding-left: 4px; }
.dtools { width: 143px; height: 41px; margin: 3px auto 1px; padding: 0 4px; display: flex; align-items: center; justify-content: space-around; background: #d2d2d2; border: 1px solid #999; }
.dtools svg { width: 24px; height: 24px; }
.actions { display: flex; justify-content: flex-end; gap: 7px; margin-top: 3px; padding: 5px 10px 0 0; border-top: 1px solid #aaa; box-shadow: inset 0 1px #fff; }
.actions button { width: 52px; height: 21px; border: 1px solid #666; border-radius: 3px; background: linear-gradient(#fff, #e8e8e8 50%, #ccc 50%, #f4f4f4); box-shadow: inset 0 0 0 1px #aaa; }
.actions .ok { background: linear-gradient(#c8f0b0, #a0dd88 50%, #62bf50 50%, #b8f0a0); border-color: #2a6a2a; box-shadow: inset 0 0 0 1px #5a9a50; }

/* bottom */
.bottombar { height: 36px; background: linear-gradient(#e4e4e4, #cacaca); display: flex; }
.taskbar { height: 45px; display: flex; align-items: center; padding: 3px 2px 0; background: linear-gradient(#f4f4f4 1px, #bbb 1px, #bbb 2px, #fff 2px, #fff 3px, #d4d0c8 3px); }
.raised { border: 1px solid; border-color: #fff #444 #444 #fff; box-shadow: inset -1px -1px #888; }
.go { width: 46px; height: 37px; display: flex; align-items: center; justify-content: center; gap: 1px; }
.go svg { width: 16px; height: 16px; }
.quick { width: 50px; height: 37px; display: flex; align-items: center; justify-content: center; }
.go + .quick { width: 60px; padding-left: 8px; }
.quick svg { width: 32px; height: 32px; }
.task { width: 160px; height: 37px; margin-right: 2px; display: flex; align-items: center; gap: 6px; padding-left: 2px; font-family: "Liberation Mono", "Noto Sans CJK SC", monospace; white-space: nowrap; }
.task svg { width: 32px; height: 32px; }
.task.now { background: #fff; font-weight: bold; border-color: #444 #fff #fff #444; box-shadow: inset 1px 1px #888; }
.ime { margin-left: auto; padding-right: 5px; border-right: 1px solid #fff; margin-right: 2px; }
.ime svg, .tray svg { width: 16px; height: 16px; }
.tray { width: 206px; height: 37px; display: flex; align-items: center; gap: 8px; padding: 0 2px 0 7px; border: 1px solid; border-color: #888 #fff #fff #888; }
.tray time { flex: 1; text-align: center; white-space: nowrap; font: 11px/16px "Liberation Sans", sans-serif; }

/* site mark lying over the lower right corner */
.mark { position: absolute; right: 0; bottom: 0; width: 290px; height: 96px; pointer-events: none; }
.m1 { font: 38px "Liberation Sans", sans-serif; fill: #555; stroke: #555; stroke-width: 1; }
.m2 { font: bold 38px "Noto Sans CJK SC", sans-serif; fill: #fb7212; }
.m3 { font: bold 40px "Liberation Sans", "Noto Sans CJK SC", sans-serif; fill: #fff; opacity: .35; }
.m4 { font: bold 15px "Liberation Sans", sans-serif; fill: #fff; opacity: .5; }
.m5 { font: bold 17px "Liberation Sans", sans-serif; fill: #777; opacity: .8; }
```
